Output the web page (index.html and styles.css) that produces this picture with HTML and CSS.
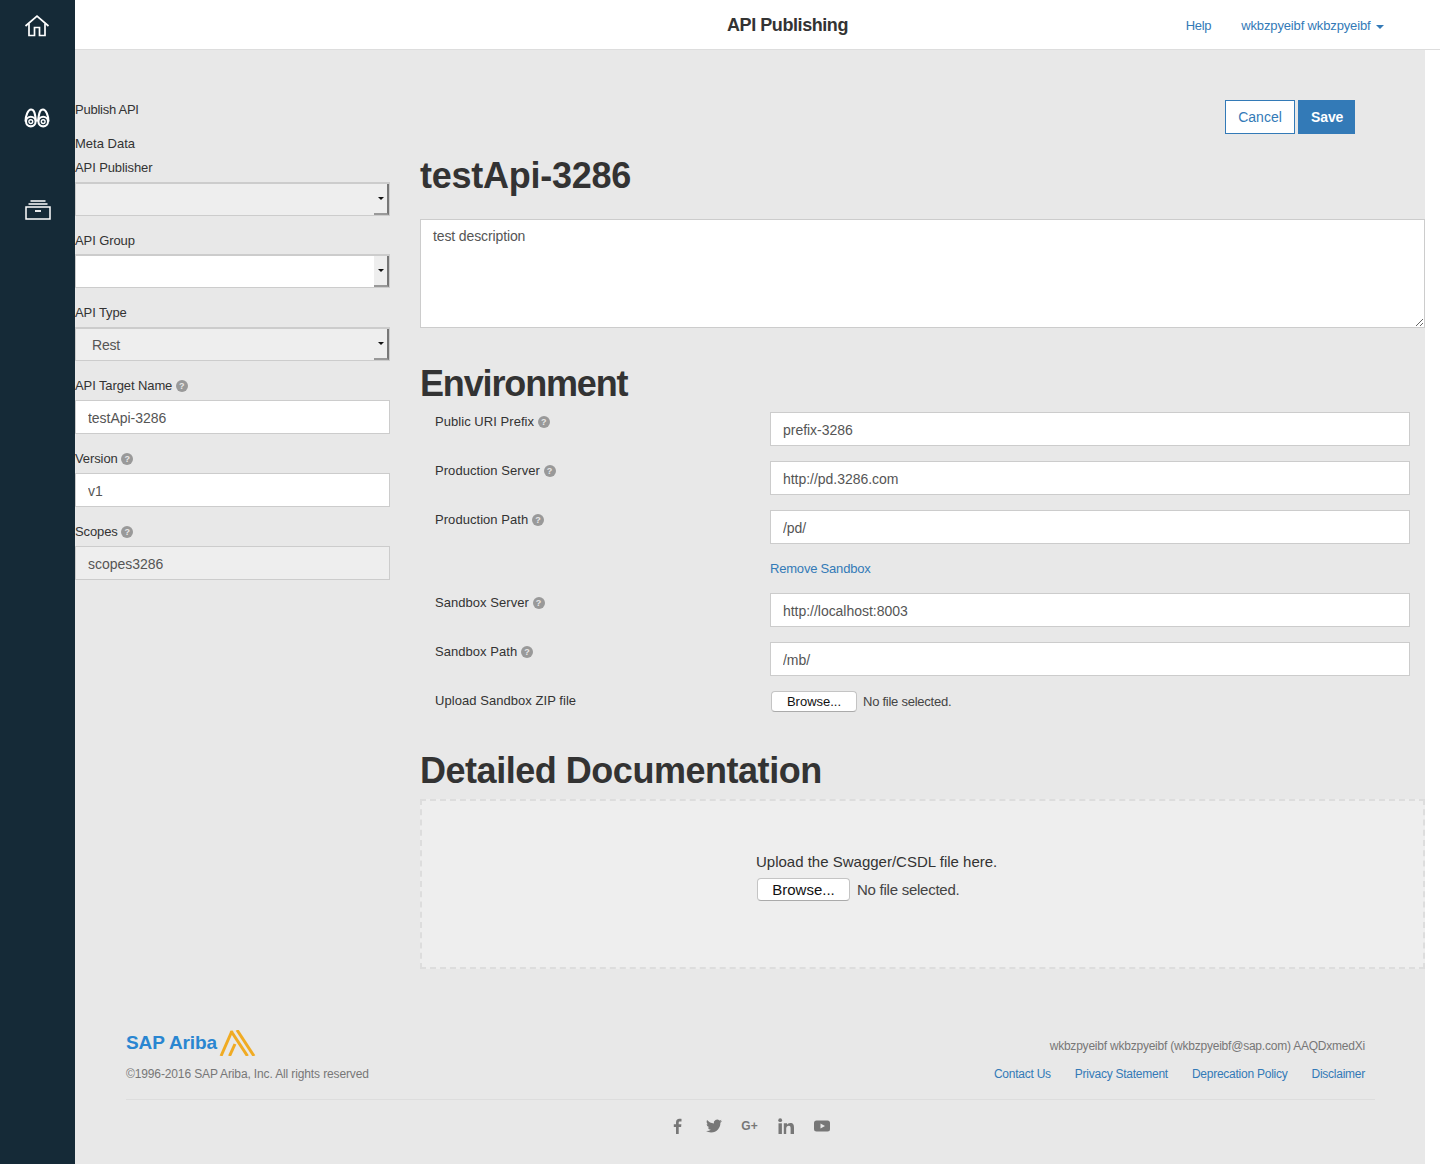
FILE: index.html
```html
<!DOCTYPE html>
<html lang="en">
<head>
    <meta charset="UTF-8">
    <meta name="viewport" content="width=device-width, initial-scale=1.0">
    <title>API Publishing</title>
    <link rel="stylesheet" href="styles.css">
</head>
<body>
    <div class="page">
        <nav class="sidebar">
            <a class="side-icon home-icon" href="#">
                <svg width="26" height="22" viewBox="0 0 26 22" fill="none" stroke="#fff" stroke-width="1.7"><path d="M1.500 11 13 1.200 24.500 11"/><path d="M5 8.500V20.500h5.500v-8h5v8H21V8.500"/></svg>
            </a>
            <a class="side-icon search-icon" href="#">
                <svg width="26" height="20" viewBox="0 0 26 20" fill="none" stroke="#fff" stroke-width="2.100"><path d="M1.500 13.500C1.500 8 4 1.500 7 1.500s4 3 5 12"/><path d="M14 13.500c1-9 2-12 5-12s5.500 6.500 5.500 12"/><circle cx="6.800" cy="13.600" r="4.800"/><circle cx="19.200" cy="13.600" r="4.800"/><circle cx="6.800" cy="13.600" r="1.900" stroke-width="1.400"/><circle cx="19.200" cy="13.600" r="1.900" stroke-width="1.400"/></svg>
            </a>
            <a class="side-icon box-icon" href="#">
                <svg width="26" height="20" viewBox="0 0 26 20" fill="none" stroke="#fff" stroke-width="1.500"><path d="M5.500 1h15M3.500 4h19"/><path d="M1 7h24v12H1z"/><path d="M10 11h6" stroke-width="1.800"/></svg>
            </a>
        </nav>

        <div class="main">
            <header class="topbar">
                <div class="topbar-title">API Publishing</div>
                <div class="topbar-nav">
                    <a class="help-link" href="#">Help</a>
                    <a class="user-link" href="#">wkbzpyeibf wkbzpyeibf <span class="caret"></span></a>
                </div>
            </header>

            <div class="content">
                <div class="columns">
                    <form class="meta-col">
                        <div class="meta-line">Publish API</div>
                        <div class="meta-line meta-title">Meta Data</div>

                        <div class="form-group">
                            <label>API Publisher</label>
                            <div class="select-box disabled"><span class="select-value"></span><span class="select-btn"></span></div>
                        </div>
                        <div class="form-group">
                            <label>API Group</label>
                            <div class="select-box"><span class="select-value"></span><span class="select-btn"></span></div>
                        </div>
                        <div class="form-group">
                            <label>API Type</label>
                            <div class="select-box disabled"><span class="select-value">Rest</span><span class="select-btn"></span></div>
                        </div>
                        <div class="form-group">
                            <label>API Target Name <span class="help">?</span></label>
                            <input class="form-control" type="text" value="testApi-3286">
                        </div>
                        <div class="form-group">
                            <label>Version <span class="help">?</span></label>
                            <input class="form-control" type="text" value="v1">
                        </div>
                        <div class="form-group">
                            <label>Scopes <span class="help">?</span></label>
                            <input class="form-control" type="text" value="scopes3286" disabled>
                        </div>
                    </form>

                    <div class="detail-col">
                        <div class="actions">
                            <button class="btn btn-outline" type="button">Cancel</button>
                            <button class="btn btn-primary" type="button">Save</button>
                        </div>

                        <h1 class="api-name">testApi-3286</h1>
                        <textarea class="description">test description</textarea>

                        <h1 class="section-title env-title">Environment</h1>
                        <div class="env-row">
                            <label>Public URI Prefix <span class="help">?</span></label>
                            <input class="form-control" type="text" value="prefix-3286">
                        </div>
                        <div class="env-row">
                            <label>Production Server <span class="help">?</span></label>
                            <input class="form-control" type="text" value="http://pd.3286.com">
                        </div>
                        <div class="env-row">
                            <label>Production Path <span class="help">?</span></label>
                            <input class="form-control" type="text" value="/pd/">
                        </div>
                        <div class="env-row link-row">
                            <span></span>
                            <a href="#">Remove Sandbox</a>
                        </div>
                        <div class="env-row">
                            <label>Sandbox Server <span class="help">?</span></label>
                            <input class="form-control" type="text" value="http://localhost:8003">
                        </div>
                        <div class="env-row">
                            <label>Sandbox Path <span class="help">?</span></label>
                            <input class="form-control" type="text" value="/mb/">
                        </div>
                        <div class="env-row upload-row">
                            <label>Upload Sandbox ZIP file</label>
                            <div class="file-field">
                                <button class="browse" type="button">Browse...</button>
                                <span>No file selected.</span>
                            </div>
                        </div>

                        <h1 class="section-title doc-title">Detailed Documentation</h1>
                        <div class="dropzone">
                            <p>Upload the Swagger/CSDL file here.</p>
                            <div class="file-field big">
                                <button class="browse" type="button">Browse...</button>
                                <span>No file selected.</span>
                            </div>
                        </div>
                    </div>
                </div>

                <footer class="footer">
                    <div class="footer-top">
                        <div>
                            <div class="logo">
                                <span class="logo-text">SAP Ariba</span>
                                <svg width="37" height="26" viewBox="0 0 37 26" fill="none" stroke="#f0ab23" stroke-width="3"><path d="M2 26 13 1"/><path d="M12 1 28.500 26"/><path d="M18 0 35 26"/><path d="M10.500 26 16 14"/></svg>
                            </div>
                            <div class="copyright">©1996-2016 SAP Ariba, Inc. All rights reserved</div>
                        </div>
                        <div class="footer-right">
                            <div class="user-line">wkbzpyeibf wkbzpyeibf (wkbzpyeibf@sap.com) AAQDxmedXi</div>
                            <div class="footer-links">
                                <a href="#">Contact Us</a>
                                <a href="#">Privacy Statement</a>
                                <a href="#">Deprecation Policy</a>
                                <a href="#">Disclaimer</a>
                            </div>
                        </div>
                    </div>
                    <div class="social">
                        <a href="#"><svg width="16" height="16" viewBox="0 0 16 16" fill="#777"><path d="M6 16V9H3.800V6.300H6V4.400C6 2 7.300.8 9.400.8c1 0 1.900.1 2.100.1v2.500h-1.400c-1.100 0-1.400.5-1.400 1.300v1.600h2.700L11.100 9H8.700v7z"/></svg></a>
                        <a href="#"><svg width="16" height="16" viewBox="0 0 24 24" fill="#777"><path d="M23.950 4.570a10 10 0 0 1-2.820.77 4.960 4.960 0 0 0 2.160-2.720 9.900 9.900 0 0 1-3.120 1.180 4.920 4.920 0 0 0-8.380 4.480C7.690 8.090 4.070 6.130 1.640 3.160a4.820 4.820 0 0 0-.67 2.480c0 1.710.87 3.210 2.190 4.100a4.900 4.900 0 0 1-2.230-.62v.06a4.920 4.920 0 0 0 3.950 4.830 5 5 0 0 1-2.210.08 4.940 4.940 0 0 0 4.600 3.420A9.870 9.870 0 0 1 0 19.540a14 14 0 0 0 7.560 2.210c9.050 0 14-7.500 14-13.980 0-.21 0-.42-.02-.63a9.940 9.940 0 0 0 2.410-2.570z"/></svg></a>
                        <a class="gplus" href="#">G+</a>
                        <a href="#"><svg width="16" height="16" viewBox="0 0 16 16" fill="#777"><path d="M.5 5.300h3.400V16H.5z"/><circle cx="2.200" cy="2.200" r="1.900"/><path d="M5.800 5.300h3.200v1.500c.5-.9 1.700-1.800 3.300-1.800 3 0 3.700 2 3.700 4.700V16h-3.400v-5.500c0-1.300 0-2.800-1.700-2.800s-2.700 1.300-2.700 2.800V16H5.800z"/></svg></a>
                        <a href="#"><svg width="16" height="16" viewBox="0 0 16 16"><rect y="2.500" width="16" height="11" rx="2.500" fill="#777"/><path d="M6.500 5.500v5L11 8z" fill="#e8e8e8"/></svg></a>
                    </div>
                </footer>
            </div>
        </div>
    </div>
</body>
</html>
```

FILE: styles.css
```css
* {
    box-sizing: border-box;
}

body {
    margin: 0;
    font-family: "Liberation Sans", Arial, sans-serif;
    font-size: 14px;
    color: #333;
    background-color: #fff;
}

a {
    color: #337ab7;
    text-decoration: none;
}

.page {
    display: flex;
    height: 1164px;
    overflow: hidden;
}

.sidebar {
    width: 75px;
    flex-shrink: 0;
    background-color: #152a37;
    display: flex;
    flex-direction: column;
    align-items: center;
}

.side-icon {
    display: flex;
    justify-content: center;
}

.home-icon {
    margin-top: 15px;
    margin-right: 1px;
}

.search-icon {
    margin-top: 71px;
    margin-right: 1px;
}

.box-icon {
    margin-top: 72px;
}

.main {
    flex: 1;
    min-width: 0;
    display: flex;
    flex-direction: column;
}

.topbar {
    height: 50px;
    flex-shrink: 0;
    display: flex;
    align-items: center;
    justify-content: space-between;
    padding: 2px 56px 0 652px;
    border-bottom: 1px solid #ddd;
    background: #fff;
}

.topbar-title {
    font-size: 18px;
    font-weight: bold;
    letter-spacing: -0.43px;
    color: #333;
}

.topbar-nav {
    display: flex;
    gap: 30px;
    font-size: 13px;
}

.help-link {
    letter-spacing: -0.3px;
}

.user-link {
    letter-spacing: -0.14px;
}

.caret {
    display: inline-block;
    width: 0;
    height: 0;
    margin-left: 2px;
    vertical-align: middle;
    border-top: 4px solid #337ab7;
    border-left: 4px solid transparent;
    border-right: 4px solid transparent;
}

.content {
    flex: 1;
    margin-right: 15px;
    padding-top: 50px;
    background-color: #e8e8e8;
}

.columns {
    display: flex;
    gap: 30px;
}

.meta-col {
    width: 315px;
    flex-shrink: 0;
    padding-top: 1px;
    font-size: 13px;
}

.meta-line {
    height: 18px;
    line-height: 18px;
    letter-spacing: -0.25px;
}

.meta-title {
    margin-top: 16px;
    margin-bottom: 4.8px;
    letter-spacing: 0;
}

.form-group {
    margin-bottom: 15px;
}

.form-group label {
    display: block;
    height: 18.8px;
    padding-top: 1px;
    line-height: 18.8px;
    margin-bottom: 5px;
    letter-spacing: -0.1px;
}

.help {
    display: inline-block;
    width: 12px;
    height: 12px;
    border-radius: 50%;
    background-color: #999;
    color: #e8e8e8;
    font-size: 9px;
    font-weight: bold;
    line-height: 12px;
    text-align: center;
    vertical-align: 1px;
}

.form-control {
    display: block;
    width: 100%;
    height: 34px;
    padding: 7px 12px 5px;
    border: 1px solid #ccc;
    background-color: #fff;
    font-family: inherit;
    font-size: 14px;
    letter-spacing: -0.03px;
    color: #555;
    border-radius: 0;
    outline: none;
}

.form-control:disabled {
    background-color: #eee;
    color: #555;
    opacity: 1;
}

.select-box {
    display: flex;
    height: 34px;
    background-color: #fff;
    border: 1px solid #ccc;
    border-top-width: 2px;
}

.select-box.disabled {
    background-color: #eee;
}

.select-value {
    flex: 1;
    padding-left: 16px;
    line-height: 33px;
    font-size: 14px;
    letter-spacing: -0.2px;
    color: #555;
}

.select-btn {
    position: relative;
    width: 15px;
    background-color: #eee;
    border-right: 2px solid #777;
    border-bottom: 2px solid #999;
}

.select-btn::after {
    content: "";
    position: absolute;
    top: 13px;
    left: 4px;
    border-top: 3px solid #111;
    border-left: 3px solid transparent;
    border-right: 3px solid transparent;
}

.detail-col {
    flex: 1;
    min-width: 0;
}

.actions {
    display: flex;
    justify-content: flex-end;
    gap: 3px;
    padding-right: 70px;
}

.btn {
    height: 34px;
    padding: 0 12px;
    border: 1px solid #337ab7;
    font-family: inherit;
    font-size: 14px;
}

.btn-outline {
    width: 70px;
    background-color: #fff;
    color: #337ab7;
}

.btn-primary {
    width: 57px;
    background-color: #337ab7;
    color: #fff;
    font-weight: bold;
    letter-spacing: -0.1px;
}

h1 {
    margin: 0;
    font-size: 36px;
    font-weight: bold;
    line-height: 40px;
    color: #333;
}

.api-name {
    margin-top: 22px;
    letter-spacing: -0.25px;
}

.description {
    display: block;
    width: 100%;
    height: 109px;
    margin-top: 23px;
    padding: 8px 12px;
    border: 1px solid #ccc;
    background-color: #fff;
    font-family: inherit;
    font-size: 14px;
    letter-spacing: -0.12px;
    color: #555;
    outline: none;
}

.env-title {
    margin-top: 36px;
    margin-bottom: 8px;
    letter-spacing: -1.15px;
}

.env-row {
    display: flex;
    padding: 0 15px;
    height: 34px;
    margin-bottom: 15px;
    font-size: 13px;
}

.env-row label {
    width: 335px;
    flex-shrink: 0;
    padding-top: 1px;
    line-height: 18px;
    letter-spacing: 0.05px;
}

.env-row .form-control {
    flex: 1;
    width: auto;
}

.link-row {
    height: 19px;
    line-height: 19px;
    letter-spacing: -0.2px;
}

.link-row span {
    width: 335px;
    flex-shrink: 0;
}

.upload-row {
    height: 23px;
    margin-bottom: 0;
}

.file-field {
    display: flex;
    align-items: flex-start;
    gap: 6px;
    font-size: 13px;
    color: #444;
}

.file-field span {
    letter-spacing: -0.25px;
}

.upload-row .file-field span {
    line-height: 21px;
}

.browse {
    width: 86px;
    height: 21px;
    margin-left: 1px;
    padding: 0;
    background-color: #fff;
    border: 1px solid #c4c4c4;
    border-bottom-color: #aaa;
    border-radius: 4px;
    font-family: inherit;
    font-size: 13px;
    color: #111;
}

.doc-title {
    margin-top: 37px;
    margin-bottom: 8px;
    letter-spacing: -0.47px;
}

.dropzone {
    height: 170px;
    padding: 51px 0 0 334px;
    border: 2px dashed #ddd;
    background-color: #eee;
}

.dropzone p {
    margin: 0 0 6px;
    font-size: 15px;
    line-height: 20px;
}

.file-field.big {
    align-items: center;
    font-size: 15px;
    gap: 7px;
}

.file-field.big .browse {
    width: 93px;
    height: 23px;
    font-size: 15px;
}

.footer {
    margin: 60px 50px 0 51px;
}

.footer-top {
    display: flex;
    justify-content: space-between;
    padding: 0 10px 18px 0;
    border-bottom: 1px solid #ddd;
}

.logo {
    display: flex;
    align-items: center;
    gap: 2px;
    height: 28px;
}

.logo-text {
    font-size: 19px;
    font-weight: bold;
    letter-spacing: -0.1px;
    color: #2a86d1;
}

.copyright {
    margin-top: 10px;
    font-size: 12px;
    letter-spacing: -0.13px;
    color: #777;
}

.footer-right {
    text-align: right;
    font-size: 12px;
    padding-top: 10px;
}

.user-line {
    letter-spacing: -0.22px;
    color: #777;
}

.footer-links {
    display: flex;
    justify-content: flex-end;
    gap: 24px;
    margin-top: 14px;
    letter-spacing: -0.25px;
}

.social {
    display: flex;
    justify-content: center;
    gap: 20px;
    margin-top: 18px;
    padding-right: 2px;
}

.social a {
    display: flex;
    width: 16px;
    height: 16px;
    align-items: center;
    justify-content: center;
}

.gplus {
    font-size: 12px;
    font-weight: bold;
    color: #777;
}
```
